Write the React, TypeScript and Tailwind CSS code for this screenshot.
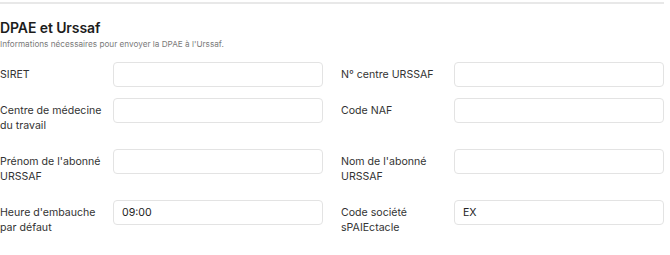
import React from "react";

const fields: { label: string; value: string }[] = [
  { label: "SIRET", value: "" },
  { label: "N° centre URSSAF", value: "" },
  { label: "Centre de médecine du travail", value: "" },
  { label: "Code NAF", value: "" },
  { label: "Prénom de l'abonné URSSAF", value: "" },
  { label: "Nom de l'abonné URSSAF", value: "" },
  { label: "Heure d'embauche par défaut", value: "09:00" },
  { label: "Code société sPAIEctacle", value: "EX" },
];

export default function App() {
  return (
    <div
      className="w-[670px] h-[255px] bg-white overflow-hidden pt-[2px]"
      style={{ fontFamily: "Inter, 'Noto Sans', sans-serif" }}
    >
      <div className="w-[664px] border-t-2 border-[#e8e8e8] pt-[15px]">
        <h2 className="text-[14px] leading-[17px] font-semibold text-[#1c1c1c] tracking-[-0.1px]">
          DPAE et Urssaf
        </h2>
        <p className="mt-[2px] text-[8.2px] leading-[12px] text-[#7a7a7a]">
          Informations nécessaires pour envoyer la DPAE à l'Urssaf.
        </p>
        <div className="mt-[12px] grid grid-cols-2 gap-x-[18px] gap-y-[11px]">
          {fields.map((f) => (
            <div key={f.label} className="grid grid-cols-[113px_1fr] items-start">
              <label className="py-[5px] text-[10.6px] leading-[15px] text-[#333333]">
                {f.label}
              </label>
              <input
                readOnly
                value={f.value}
                className="h-[25px] w-full rounded-[4px] border border-[#e3e3e3] bg-white px-[8px] text-[10.6px] text-[#222] outline-none"
                style={{ fontFamily: "Inter, 'Noto Sans', sans-serif" }}
              />
            </div>
          ))}
        </div>
      </div>
    </div>
  );
}
